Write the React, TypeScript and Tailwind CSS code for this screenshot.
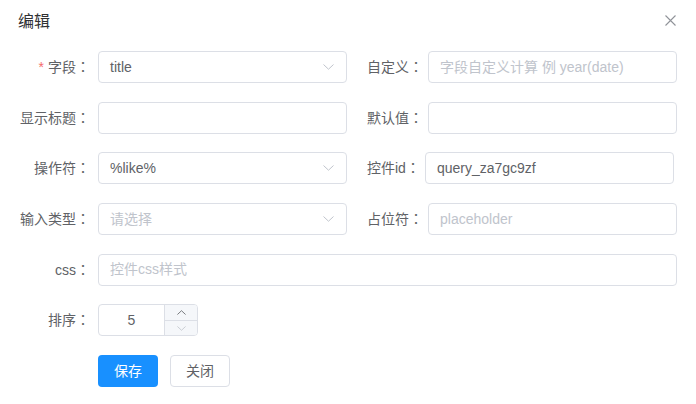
import { ReactNode } from "react";

const font = { fontFamily: '"Liberation Sans", "Noto Sans CJK SC", sans-serif' };

function Chevron({ up = false, className = "" }: { up?: boolean; className?: string }) {
    return (
        <svg width="11" height="6" viewBox="0 0 11 6" className={className} fill="none">
            <path
                d={up ? "M0.5 5.5 L5.5 0.8 L10.5 5.5" : "M0.5 0.5 L5.5 5.2 L10.5 0.5"}
                stroke="currentColor"
                strokeWidth="1"
            />
        </svg>
    );
}

// full-width colon centred in its box, as in the reference
function Colon() {
    return <span style={{ fontFamily: '"Noto Sans CJK JP", sans-serif' }}>：</span>;
}

function TextInput({ value, placeholder, width = "w-[249px]" }: { value?: string; placeholder?: string; width?: string }) {
    return (
        <div className={`${width} h-8 border border-[#dcdfe6] rounded-[4px] px-[11px] flex items-center text-[14px] bg-white`}>
            {value ? (
                <span className="text-[#606266]">{value}</span>
            ) : (
                <span className="text-[#c0c4cc]">{placeholder}</span>
            )}
        </div>
    );
}

function Select({ value, placeholder }: { value?: string; placeholder?: string }) {
    return (
        <div className="w-[249px] h-8 border border-[#dcdfe6] rounded-[4px] pl-[11px] pr-[12px] flex items-center justify-between text-[14px] bg-white">
            {value ? (
                <span className="text-[#606266]">{value}</span>
            ) : (
                <span className="text-[#c0c4cc]">{placeholder}</span>
            )}
            <Chevron className="text-[#c0c4cc]" />
        </div>
    );
}

function Label({ children, required = false }: { children: ReactNode; required?: boolean }) {
    return (
        <div className="w-[98px] shrink-0 text-right pr-[8px] text-[14px] text-[#606266]">
            {required && <span className="text-[#f56c6c] mr-[4px]">*</span>}
            {children}
            <Colon />
        </div>
    );
}

function RightLabel({ children }: { children: ReactNode }) {
    return (
        <div className="shrink-0 pl-[20px] pr-[5px] text-[14px] text-[#606266]">
            {children}
            <Colon />
        </div>
    );
}

export default function App() {
    return (
        <div className="w-[696px] h-[404px] bg-white relative" style={font}>
            <div className="flex items-center justify-between pl-[18px] pr-[20px] pt-[10px] h-[34px]">
                <span className="text-[16px] leading-6 text-[#303133]">编辑</span>
                <svg width="11" height="11" viewBox="0 0 11 11" className="text-[#909399] mt-[-4px]">
                    <path d="M0.5 0.5 L10.5 10.5 M10.5 0.5 L0.5 10.5" stroke="currentColor" strokeWidth="1.1" />
                </svg>
            </div>

            <div className="flex flex-col gap-[18.7px] pt-[17px]">
                <div className="flex items-center">
                    <Label required>字段</Label>
                    <Select value="title" />
                    <RightLabel>自定义</RightLabel>
                    <TextInput placeholder="字段自定义计算 例 year(date)" />
                </div>
                <div className="flex items-center">
                    <Label>显示标题</Label>
                    <TextInput />
                    <RightLabel>默认值</RightLabel>
                    <TextInput />
                </div>
                <div className="flex items-center">
                    <Label>操作符</Label>
                    <Select value="%like%" />
                    <RightLabel>控件id</RightLabel>
                    <TextInput value="query_za7gc9zf" />
                </div>
                <div className="flex items-center">
                    <Label>输入类型</Label>
                    <Select placeholder="请选择" />
                    <RightLabel>占位符</RightLabel>
                    <TextInput placeholder="placeholder" />
                </div>
                <div className="flex items-center">
                    <Label>css</Label>
                    <TextInput placeholder="控件css样式" width="w-[579px]" />
                </div>
                <div className="flex items-center">
                    <Label>排序</Label>
                    <div className="w-[100px] h-8 border border-[#dcdfe6] rounded-[4px] flex overflow-hidden">
                        <div className="flex-1 flex items-center justify-center text-[14px] text-[#606266]">5</div>
                        <div className="w-[33px] border-l border-[#dcdfe6] bg-[#f5f7fa] flex flex-col">
                            <div className="flex-1 flex items-center justify-center border-b border-[#dcdfe6] text-[#606266]">
                                <Chevron up className="w-[9px] h-[5px]" />
                            </div>
                            <div className="flex-1 flex items-center justify-center text-[#c0c4cc]">
                                <Chevron className="w-[9px] h-[5px]" />
                            </div>
                        </div>
                    </div>
                </div>
                <div className="flex items-center pl-[98px] gap-[12px]">
                    <button className="w-[60px] h-8 rounded-[4px] bg-[#1890ff] text-white text-[14px]">保存</button>
                    <button className="w-[60px] h-8 rounded-[4px] border border-[#dcdfe6] bg-white text-[#606266] text-[14px]">关闭</button>
                </div>
            </div>
        </div>
    );
}
